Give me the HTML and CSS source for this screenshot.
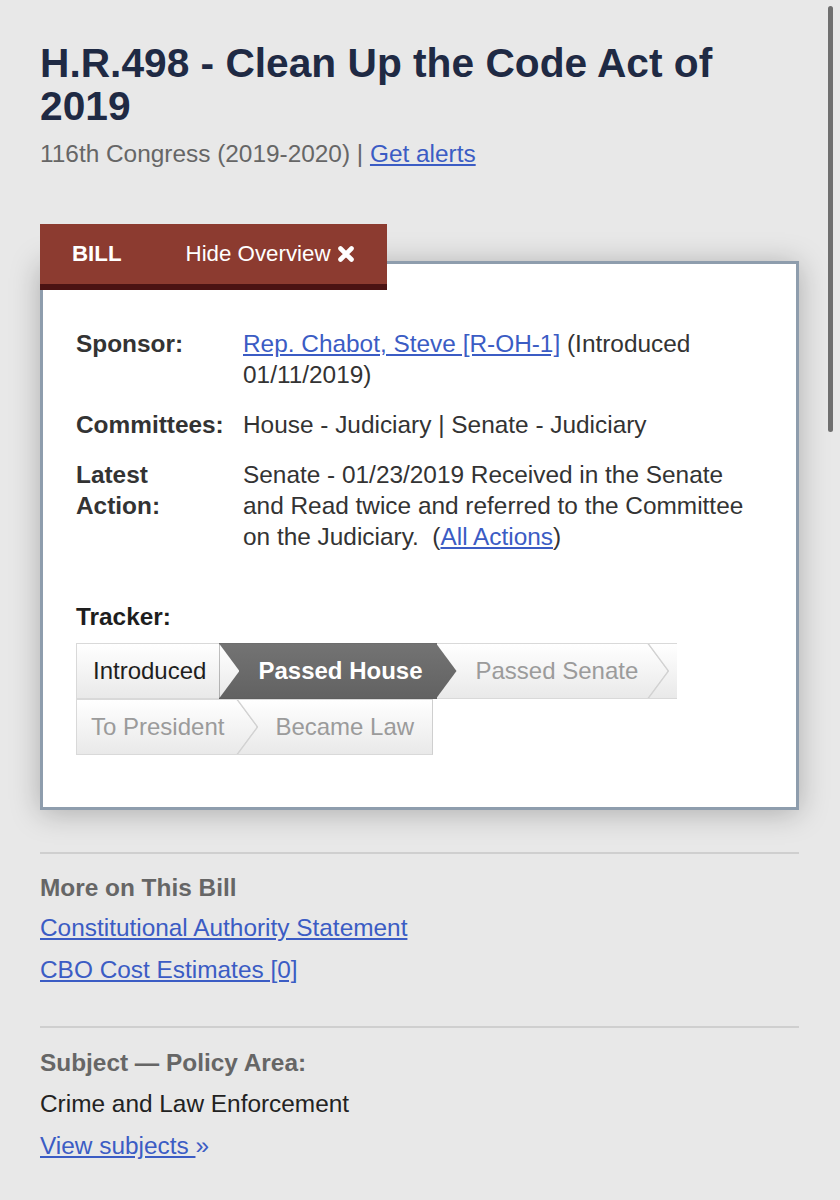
FILE: index.html
```html
<!DOCTYPE html>
<html lang="en">
<head>
<meta charset="utf-8">
<title>H.R.498 - Clean Up the Code Act of 2019</title>
<link rel="stylesheet" href="styles.css">
</head>
<body>
<main class="page">
  <h1 class="bill-title">H.R.498 - Clean Up the Code Act of 2019</h1>
  <p class="congress">116th Congress (2019-2020) | <a class="link" href="#">Get alerts</a></p>

  <section class="overview">
    <div class="tab">
      <span class="tab-type">BILL</span>
      <span class="tab-toggle">Hide Overview
        <svg class="tab-x" viewBox="0 0 18 18" width="18" height="18" aria-hidden="true">
          <path d="M3.5 3.5 L14.5 14.5 M14.5 3.5 L3.5 14.5" stroke="#fff" stroke-width="4.6" stroke-linecap="round" fill="none"/>
        </svg>
      </span>
    </div>
    <div class="card">
      <dl class="facts">
        <dt>Sponsor:</dt>
        <dd><a class="link" href="#">Rep. Chabot, Steve [R-OH-1]</a> (Introduced 01/11/2019)</dd>
        <dt>Committees:</dt>
        <dd>House - Judiciary | Senate - Judiciary</dd>
        <dt>Latest<br>Action:</dt>
        <dd>Senate - 01/23/2019 Received in the Senate and Read twice and referred to the Committee on the Judiciary.&nbsp; (<a class="link" href="#">All Actions</a>)</dd>
      </dl>
      <h3 class="tracker-label">Tracker:</h3>
      <ol class="tracker">
        <li class="step step-start step-done">Introduced</li>
        <li class="step step-current">Passed House</li>
        <li class="step step-row-end">Passed Senate</li>
        <li class="step step-start step-tight">To President</li>
        <li class="step step-last">Became Law</li>
      </ol>
    </div>
  </section>

  <hr class="divider divider-first">
  <section class="more">
    <h2 class="side-heading">More on This Bill</h2>
    <a class="link side-link" href="#">Constitutional Authority Statement</a>
    <a class="link side-link" href="#">CBO Cost Estimates [0]</a>
  </section>

  <hr class="divider divider-second">
  <section class="subject">
    <h2 class="side-heading side-heading-subject">Subject — Policy Area:</h2>
    <p class="subject-text">Crime and Law Enforcement</p>
    <a class="link side-link" href="#">View subjects <span class="raquo">»</span></a>
  </section>
</main>
<div class="scrollbar" aria-hidden="true"></div>
</body>
</html>
```
FILE: styles.css
```css
html, body {
  margin: 0;
  padding: 0;
}

body {
  background: #e8e8e8;
  font-family: "Liberation Sans", Arial, Helvetica, sans-serif;
  color: #333;
  overflow: hidden;
}

.page {
  padding: 0 41px 40px 40px;
}

.link {
  color: #3b5cc4;
  text-decoration: underline;
  text-underline-offset: 2px;
}

.bill-title {
  margin: 42px 0 0;
  font-size: 40.7px;
  line-height: 43px;
  font-weight: 700;
  color: #1f2a44;
}

.congress {
  margin: 11px 0 0;
  font-size: 24.4px;
  line-height: 30px;
  color: #666;
}

.overview {
  margin-top: 55px;
}

.tab {
  position: relative;
  z-index: 2;
  display: flex;
  align-items: center;
  gap: 64px;
  width: fit-content;
  height: 60px;
  padding: 0 32px;
  background: #8c3b30;
  border-bottom: 6px solid #4b1313;
  color: #fff;
  font-size: 22.3px;
}

.tab-type {
  font-weight: 700;
}

.tab-toggle {
  display: inline-flex;
  align-items: center;
  gap: 6px;
}

.tab-x {
  display: block;
}

.card {
  margin-top: -29px;
  background: #fff;
  border: 3px solid #8e9dad;
  padding: 64px 36px 52px 33px;
  box-shadow: 0 3px 28px rgba(0, 0, 0, 0.26);
}

.facts {
  display: grid;
  grid-template-columns: 167px 1fr;
  row-gap: 19px;
  margin: 0;
  font-size: 24.4px;
  line-height: 31px;
}

.facts dt {
  font-weight: 700;
  color: #333;
}

.facts dd {
  margin: 0;
  color: #333;
}

.tracker-label {
  margin: 49px 0 11px;
  font-size: 24.4px;
  line-height: 31px;
  font-weight: 700;
  color: #1e1e1e;
}

.tracker {
  list-style: none;
  margin: 0;
  padding: 0;
  display: flex;
  flex-wrap: wrap;
}

.step {
  position: relative;
  box-sizing: border-box;
  height: 56px;
  padding: 0 14px 0 39px;
  border-top: 1px solid #d9d9d9;
  border-bottom: 1px solid #d9d9d9;
  background: linear-gradient(#ffffff, #e9e9e9);
  font-size: 24px;
  line-height: 54px;
  color: #9b9b9b;
  white-space: nowrap;
}

.step::before,
.step::after {
  content: "";
  position: absolute;
  top: 0;
  height: 100%;
  z-index: 1;
}

.step::before {
  left: 100%;
  width: 22px;
  background: #d2d2d2;
  clip-path: polygon(0 0, 2px 0, 22px 50%, 2px 100%, 0 100%, 20px 50%);
}

.step::after {
  left: 100%;
  width: 20px;
  background: linear-gradient(#ffffff, #e9e9e9);
  clip-path: polygon(0 0, 100% 50%, 0 100%);
}

.step-start {
  padding-left: 16px;
  border-left: 1px solid #d9d9d9;
}

.step-tight {
  padding-left: 14px;
  padding-right: 12px;
}

.step-done {
  color: #1e1e1e;
  padding-right: 13px;
}

.step-done::before {
  display: none;
}

.step-current {
  background: linear-gradient(#737373, #626262);
  border-top-color: #6d6d6d;
  border-bottom-color: #5e5e5e;
  color: #fff;
  font-weight: 700;
}

.step-current::before {
  display: none;
}

.step-current::after {
  background: linear-gradient(#737373, #626262);
}

.step-row-end {
  padding-right: 39px;
}

.step-row-end::before,
.step-row-end::after {
  left: auto;
  right: 8px;
}

.step-row-end::after {
  right: 10px;
}

.step-last {
  padding-right: 18px;
  border-right: 1px solid #cfcfcf;
}

.step-last::before,
.step-last::after {
  display: none;
}

.divider {
  border: 0;
  height: 2px;
  background: #cfcfcf;
  margin: 0;
}

.divider-first {
  margin-top: 42px;
}

.divider-second {
  margin-top: 35px;
}

.side-heading {
  margin: 19px 0 4px;
  font-size: 24.4px;
  line-height: 30px;
  font-weight: 700;
  color: #666;
}

.side-heading-subject {
  margin: 20px 0 5px;
}

.side-link {
  display: block;
  width: fit-content;
  font-size: 24.4px;
  line-height: 42px;
}

.subject-text {
  margin: 0;
  font-size: 24.4px;
  line-height: 42px;
  color: #222;
}

.raquo {
  display: inline-block;
  text-decoration: none;
}

.scrollbar {
  position: fixed;
  top: 6px;
  right: 7px;
  width: 5px;
  height: 426px;
  border-radius: 3px;
  background: #6f6f6f;
}
```
